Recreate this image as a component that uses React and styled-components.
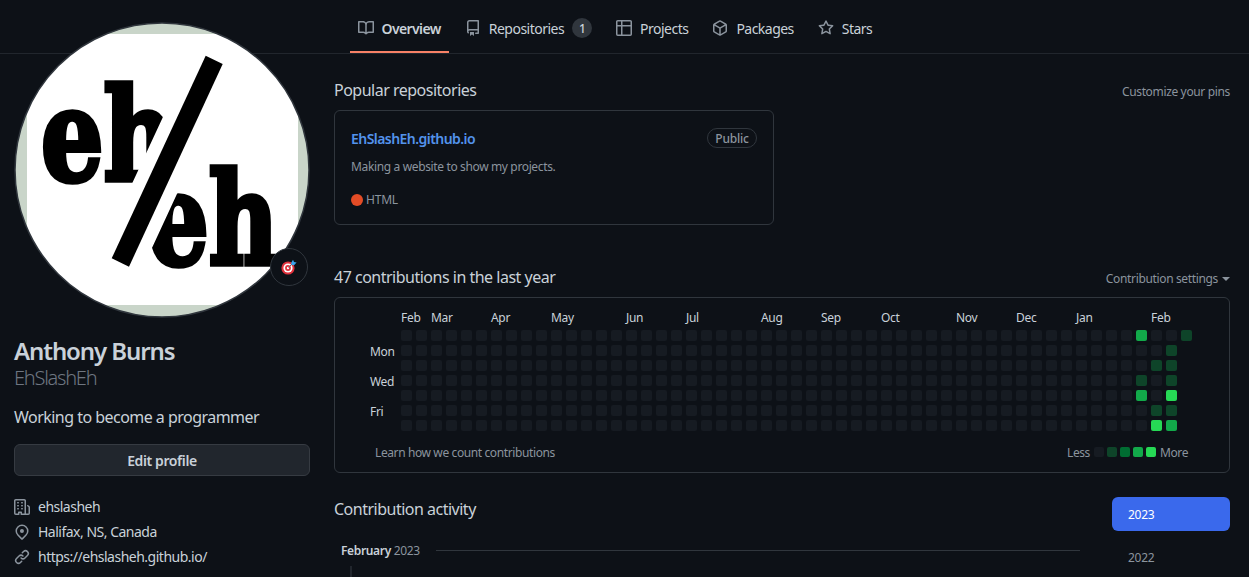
import React from "react";
import styled, { createGlobalStyle } from "styled-components";

const Global = createGlobalStyle`
  html, body { margin: 0; padding: 0; background: #0d1117; }
  body { font-family: "Noto Sans", "Open Sans", sans-serif; color: #c9d1d9; }
  #root { height: 100vh; overflow: hidden; }
  * { box-sizing: border-box; }
`;

const Header = styled.header`
  height: 54px;
  border-bottom: 1px solid #21262d;
  padding-left: 349.5px;
  display: flex;
  gap: 8px;
`;
const Tab = styled.div`
  position: relative;
  height: 53px;
  padding: 6px 8px 0;
  display: flex;
  align-items: center;
  gap: 8px;
  font-size: 14px;
  font-weight: ${(p) => (p.$active ? 600 : 400)};
  letter-spacing: ${(p) => (p.$active ? "-0.6px" : "-0.52px")};
  color: #c9d1d9;
  border-bottom: 2px solid ${(p) => (p.$active ? "#f78166" : "transparent")};
  white-space: nowrap;
  svg { fill: #8b949e; flex: none; margin-top: -1px; }
`;
const Counter = styled.span`
  width: 20px;
  height: 20px;
  margin-top: -1px;
  border-radius: 10px;
  background: #30363d;
  font-size: 12px;
  font-weight: 500;
  display: flex;
  align-items: center;
  justify-content: center;
`;

const Body = styled.div`
  display: flex;
  padding: 0 19px 0 14px;
  gap: 24px;
`;
const Sidebar = styled.aside`
  width: 296px;
  flex: none;
  margin-top: -32px;
`;
const AvatarWrap = styled.div`
  position: relative;
  width: 296px;
  height: 296px;
`;
const AvatarSvg = styled.svg`
  display: block;
  width: 296px;
  height: 296px;
`;
const StatusBadge = styled.div`
  position: absolute;
  left: 256px;
  top: 226px;
  width: 38px;
  height: 38px;
  border-radius: 50%;
  background: #0d1117;
  border: 1px solid #30363d;
  display: flex;
  align-items: center;
  justify-content: center;
`;
const Name = styled.div`
  margin-top: 18px;
  font-size: 24px;
  line-height: 30px;
  font-weight: 600;
  letter-spacing: -1.1px;
  color: #c9d1d9;
`;
const Login = styled.div`
  font-size: 20px;
  line-height: 24px;
  font-weight: 300;
  letter-spacing: -1.25px;
  color: #6e7681;
`;
const Bio = styled.div`
  margin-top: 15px;
  font-size: 16px;
  line-height: 24px;
  letter-spacing: -0.53px;
  color: #c9d1d9;
`;
const EditButton = styled.div`
  margin-top: 15px;
  height: 32px;
  background: #21262d;
  border: 1px solid #363b42;
  border-radius: 6px;
  font-size: 14px;
  font-weight: 600;
  letter-spacing: -0.4px;
  color: #c9d1d9;
  display: flex;
  align-items: center;
  justify-content: center;
`;
const Details = styled.ul`
  list-style: none;
  margin: 18px 0 0;
  padding: 0;
`;
const Detail = styled.li`
  height: 25px;
  display: flex;
  align-items: center;
  gap: 8px;
  font-size: 14px;
  letter-spacing: -0.5px;
  color: #c9d1d9;
  svg { fill: #8b949e; flex: none; }
`;

const Main = styled.main`
  flex: 1;
  min-width: 0;
  padding-top: 24px;
`;
const SectionHead = styled.div`
  height: 24px;
  display: flex;
  align-items: center;
  justify-content: space-between;
`;
const Heading = styled.h2`
  margin: 0;
  font-size: 16px;
  line-height: 24px;
  font-weight: 400;
  letter-spacing: -0.5px;
  color: #c9d1d9;
`;
const SmallLink = styled.span`
  padding-top: 3px;
  font-size: 12px;
  letter-spacing: -0.35px;
  color: #8b949e;
  display: flex;
  align-items: center;
  gap: 4px;
`;
const Caret = styled.i`
  width: 0;
  height: 0;
  border-left: 4px solid transparent;
  border-right: 4px solid transparent;
  border-top: 4px solid #8b949e;
`;
const RepoCard = styled.div`
  width: 440px;
  height: 115px;
  margin-top: 8px;
  padding: 17px 16px 0;
  border: 1px solid #30363d;
  border-radius: 6px;
`;
const RepoTop = styled.div`
  display: flex;
  justify-content: space-between;
  align-items: center;
  height: 20px;
`;
const RepoName = styled.span`
  font-size: 14px;
  font-weight: 600;
  letter-spacing: -0.55px;
  color: #5393ec;
`;
const Pill = styled.span`
  height: 20px;
  width: 50px;
  border: 1px solid #30363d;
  border-radius: 10px;
  font-size: 12px;
  font-weight: 500;
  letter-spacing: -0.2px;
  color: #8b949e;
  display: flex;
  align-items: center;
  justify-content: center;
`;
const RepoDesc = styled.div`
  margin-top: 10px;
  font-size: 12px;
  line-height: 18px;
  letter-spacing: -0.36px;
  color: #8b949e;
`;
const RepoMeta = styled.div`
  margin-top: 15px;
  display: flex;
  align-items: center;
  gap: 3px;
  font-size: 12px;
  line-height: 18px;
  letter-spacing: -0.2px;
  color: #8b949e;
`;
const LangDot = styled.i`
  width: 12px;
  height: 12px;
  border-radius: 50%;
  background: #e34c26;
`;
const ContribHead = styled(SectionHead)`
  margin-top: 40px;
`;
const CalendarBox = styled.div`
  margin-top: 8px;
  height: 176px;
  border: 1px solid #30363d;
  border-radius: 6px;
  padding-top: 11px;
`;
const Months = styled.div`
  display: grid;
  grid-template-columns: repeat(53, 15px);
  height: 18px;
  margin: 0 0 3px 66px;
  font-size: 12px;
  line-height: 18px;
  letter-spacing: -0.3px;
  color: #c9d1d9;
`;
const Month = styled.span`
  grid-row: 1;
  grid-column-start: ${(p) => p.$col + 1};
  white-space: nowrap;
  width: 0;
`;
const Heat = styled.div`
  display: flex;
  margin-left: 35px;
`;
const DayLabels = styled.div`
  width: 31px;
  display: grid;
  grid-template-rows: repeat(7, 15px);
  font-size: 12px;
  letter-spacing: -0.3px;
  color: #c9d1d9;
`;
const DayLabel = styled.span`
  grid-row: ${(p) => p.$row + 1};
  line-height: 13px;
  display: block;
`;
const Cells = styled.div`
  display: grid;
  grid-template-rows: repeat(7, 11px);
  grid-auto-columns: 11px;
  grid-auto-flow: column;
  gap: 4px;
`;
const LEVELS = ["#161b22", "#0e4429", "#006d32", "#12a94a", "#26d955"];
const Cell = styled.i`
  display: block;
  width: ${(p) => p.$size || 11}px;
  height: ${(p) => p.$size || 11}px;
  border-radius: 2px;
  background: ${(p) => LEVELS[p.$level]};
`;
const CalFooter = styled.div`
  margin-top: 8px;
  padding: 0 40px;
  display: flex;
  justify-content: space-between;
  align-items: center;
  height: 18px;
  font-size: 12px;
  letter-spacing: -0.39px;
  color: #8b949e;
`;
const Legend = styled.div`
  display: flex;
  align-items: center;
  gap: 3px;
`;
const LegendText = styled.span`
  margin: 0 1px;
  letter-spacing: -0.4px;
`;
const Activity = styled.div`
  margin-top: 24px;
  display: flex;
  gap: 32px;
`;
const ActivityMain = styled.div`
  flex: 1;
  min-width: 0;
`;
const MonthRow = styled.div`
  margin-top: 20px;
  padding-left: 7px;
  height: 18px;
  display: flex;
  align-items: center;
  gap: 16px;
  font-size: 12px;
  letter-spacing: -0.35px;
  color: #8b949e;
  b { font-weight: 600; color: #c9d1d9; }
`;
const Rule = styled.i`
  flex: 1;
  height: 1px;
  background: #30363d;
`;
const Stem = styled.div`
  margin: 7px 0 0 16px;
  width: 2px;
  height: 30px;
  background: #21262d;
`;
const Years = styled.div`
  width: 118px;
  flex: none;
`;
const Year = styled.div`
  height: 34px;
  padding-left: 16px;
  border-radius: 6px;
  display: flex;
  align-items: center;
  font-size: 12px;
  letter-spacing: -0.3px;
  margin-bottom: 9px;
  background: ${(p) => (p.$active ? "#3a69ec" : "transparent")};
  color: ${(p) => (p.$active ? "#ffffff" : "#8b949e")};
`;

const Icon = ({ d, size = 16 }) => (
  <svg width={size} height={size} viewBox="0 0 16 16" aria-hidden="true"><path d={d} /></svg>
);
const I = {
  book: "M0 1.75A.75.75 0 0 1 .75 1h4.253c1.227 0 2.317.59 3 1.501A3.743 3.743 0 0 1 11.006 1h4.245a.75.75 0 0 1 .75.75v10.5a.75.75 0 0 1-.75.75h-4.507a2.25 2.25 0 0 0-1.591.659l-.622.621a.75.75 0 0 1-1.06 0l-.622-.621A2.25 2.25 0 0 0 5.258 13H.75a.75.75 0 0 1-.75-.75Zm7.251 10.324.004-5.073-.002-2.253A2.25 2.25 0 0 0 5.003 2.5H1.5v9h3.757a3.75 3.75 0 0 1 1.994.574ZM8.755 4.75l-.004 7.322a3.752 3.752 0 0 1 1.992-.572H14.5v-9h-3.495a2.25 2.25 0 0 0-2.25 2.25Z",
  repo: "M2 2.5A2.5 2.5 0 0 1 4.5 0h8.75a.75.75 0 0 1 .75.75v12.5a.75.75 0 0 1-.75.75h-2.5a.75.75 0 0 1 0-1.5h1.75v-2h-8a1 1 0 0 0-.714 1.7.75.75 0 1 1-1.072 1.05A2.495 2.495 0 0 1 2 11.5Zm10.5-1h-8a1 1 0 0 0-1 1v6.708A2.486 2.486 0 0 1 4.5 9h8ZM5 12.25a.25.25 0 0 1 .25-.25h3.5a.25.25 0 0 1 .25.25v3.25a.25.25 0 0 1-.4.2l-1.45-1.087a.249.249 0 0 0-.3 0L5.4 15.7a.25.25 0 0 1-.4-.2Z",
  table: "M0 1.75C0 .784.784 0 1.75 0h12.5C15.216 0 16 .784 16 1.75v12.5A1.75 1.75 0 0 1 14.25 16H1.75A1.75 1.75 0 0 1 0 14.25ZM6.5 6.5v8h7.75a.25.25 0 0 0 .25-.25V6.5Zm8-1.5V1.75a.25.25 0 0 0-.25-.25H6.5V5Zm-13 1.5v7.75c0 .138.112.25.25.25H5v-8ZM5 5V1.5H1.75a.25.25 0 0 0-.25.25V5Z",
  pkg: "m8.878.392 5.25 3.045c.54.314.872.89.872 1.514v6.098a1.75 1.75 0 0 1-.872 1.514l-5.25 3.045a1.75 1.75 0 0 1-1.756 0l-5.25-3.045A1.75 1.75 0 0 1 1 11.049V4.951c0-.624.332-1.201.872-1.514L7.122.392a1.75 1.75 0 0 1 1.756 0ZM7.875 1.69l-4.63 2.685L8 7.133l4.755-2.758-4.63-2.685a.248.248 0 0 0-.25 0ZM2.5 5.677v5.372c0 .09.047.171.125.216l4.625 2.683V8.432Zm6.25 8.271 4.625-2.683a.25.25 0 0 0 .125-.216V5.677L8.75 8.432Z",
  star: "M8 .25a.75.75 0 0 1 .673.418l1.882 3.815 4.21.612a.75.75 0 0 1 .416 1.279l-3.046 2.97.719 4.192a.751.751 0 0 1-1.088.791L8 12.347l-3.766 1.98a.75.75 0 0 1-1.088-.79l.72-4.194L.818 6.374a.75.75 0 0 1 .416-1.28l4.21-.611L7.327.668A.75.75 0 0 1 8 .25Zm0 2.445L6.615 5.5a.75.75 0 0 1-.564.41l-3.097.45 2.24 2.184a.75.75 0 0 1 .216.664l-.528 3.084 2.769-1.456a.75.75 0 0 1 .698 0l2.77 1.456-.53-3.084a.75.75 0 0 1 .216-.664l2.24-2.183-3.096-.45a.75.75 0 0 1-.564-.41L8 2.694Z",
  org: "M1.75 16A1.75 1.75 0 0 1 0 14.25V1.75C0 .784.784 0 1.75 0h8.5C11.216 0 12 .784 12 1.75v12.5c0 .085-.006.168-.018.25h2.268a.25.25 0 0 0 .25-.25V8.285a.25.25 0 0 0-.111-.208l-1.055-.703a.749.749 0 1 1 .832-1.248l1.055.703c.487.325.779.871.779 1.456v5.965A1.75 1.75 0 0 1 14.25 16h-3.5a.766.766 0 0 1-.197-.026c-.099.017-.2.026-.303.026h-3a.75.75 0 0 1-.75-.75V14h-1v1.25a.75.75 0 0 1-.75.75Zm-.25-1.75c0 .138.112.25.25.25H4v-1.25a.75.75 0 0 1 .75-.75h2.5a.75.75 0 0 1 .75.75v1.25h2.25a.25.25 0 0 0 .25-.25V1.75a.25.25 0 0 0-.25-.25h-8.5a.25.25 0 0 0-.25.25ZM3.75 6h.5a.75.75 0 0 1 0 1.5h-.5a.75.75 0 0 1 0-1.5ZM3 3.75A.75.75 0 0 1 3.75 3h.5a.75.75 0 0 1 0 1.5h-.5A.75.75 0 0 1 3 3.75Zm4 3A.75.75 0 0 1 7.75 6h.5a.75.75 0 0 1 0 1.5h-.5A.75.75 0 0 1 7 6.75ZM7.75 3h.5a.75.75 0 0 1 0 1.5h-.5a.75.75 0 0 1 0-1.5ZM3 9.75A.75.75 0 0 1 3.75 9h.5a.75.75 0 0 1 0 1.5h-.5A.75.75 0 0 1 3 9.75ZM7.75 9h.5a.75.75 0 0 1 0 1.5h-.5a.75.75 0 0 1 0-1.5Z",
  pin: "m12.596 11.596-3.535 3.536a1.5 1.5 0 0 1-2.122 0l-3.535-3.536a6.5 6.5 0 1 1 9.192-9.193 6.5 6.5 0 0 1 0 9.193Zm-1.06-8.132v-.001a5 5 0 1 0-7.072 7.072L8 14.07l3.536-3.534a5 5 0 0 0 0-7.072ZM8 9a2 2 0 1 1-.001-3.999A2 2 0 0 1 8 9Z",
  link: "m7.775 3.275 1.25-1.25a3.5 3.5 0 1 1 4.95 4.95l-2.5 2.5a3.5 3.5 0 0 1-4.95 0 .751.751 0 0 1 .018-1.042.751.751 0 0 1 1.042-.018 1.998 1.998 0 0 0 2.83 0l2.5-2.5a2.002 2.002 0 0 0-2.83-2.83l-1.25 1.25a.751.751 0 0 1-1.042-.018.751.751 0 0 1-.018-1.042Zm-4.69 9.64a1.998 1.998 0 0 0 2.83 0l1.25-1.25a.751.751 0 0 1 1.042.018.751.751 0 0 1 .018 1.042l-1.25 1.25a3.5 3.5 0 1 1-4.95-4.95l2.5-2.5a3.5 3.5 0 0 1 4.95 0 .751.751 0 0 1-.018 1.042.751.751 0 0 1-1.042.018 1.998 1.998 0 0 0-2.83 0l-2.5 2.5a1.998 1.998 0 0 0 0 2.83Z",
};

const MONTHS = [["Feb",0],["Mar",2],["Apr",6],["May",10],["Jun",15],["Jul",19],["Aug",24],["Sep",28],["Oct",32],["Nov",37],["Dec",41],["Jan",45],["Feb",50]];
const ACTIVE = {
  "49-0": 3, "49-3": 1, "49-4": 3,
  "50-2": 1, "50-5": 1, "50-6": 4,
  "51-1": 1, "51-2": 1, "51-3": 1, "51-4": 4, "51-5": 1, "51-6": 3,
  "52-0": 1,
};
const cells = [];
for (let c = 0; c < 53; c++) {
  const rows = c === 52 ? 1 : 7;
  for (let r = 0; r < rows; r++) cells.push({ key: `${c}-${r}`, level: ACTIVE[`${c}-${r}`] || 0 });
}

const Logo = () => (
  <AvatarSvg viewBox="0 0 296 296">
    <defs>
      <clipPath id="disc"><circle cx="148" cy="148" r="147" /></clipPath>
    </defs>
    <g clipPath="url(#disc)">
      <rect width="296" height="296" fill="#c9d5c9" />
      <rect x="13" y="12" width="271" height="271" fill="#ffffff" />
      <g fontFamily="'DejaVu Serif', serif" fontWeight="700" fontSize="128" fill="#000" stroke="#000" strokeWidth="5.5" strokeLinejoin="miter">
        <text x="27" y="158" textLength="134" lengthAdjust="spacingAndGlyphs">eh</text>
        <text x="134" y="242" textLength="130" lengthAdjust="spacingAndGlyphs">eh</text>
      </g>
      <polygon points="191.7,33.7 208.7,42 115,244.7 97.7,236.3" fill="#000" stroke="#fff" strokeWidth="26" strokeLinejoin="miter" paintOrder="stroke" />
    </g>
    <circle cx="148" cy="148" r="147" fill="none" stroke="#30363d" strokeWidth="1.5" />
  </AvatarSvg>
);

const Dart = () => (
  <svg width="16" height="16" viewBox="0 0 16 16" aria-hidden="true">
    <circle cx="7" cy="9" r="6.6" fill="#e0313c" />
    <circle cx="7" cy="9" r="4.6" fill="#fff" />
    <circle cx="7" cy="9" r="2.9" fill="#e0313c" />
    <circle cx="7" cy="9" r="1.2" fill="#fff" />
    <path d="M7.5 8.5 11 5" stroke="#5b6770" strokeWidth="1" />
    <path d="M10 4.2 12 .8l1 2.2 2.6.4-2.6 2.8-2-.2Z" fill="#3aa5ee" />
  </svg>
);

export default function App() {
  return (
    <>
      <Global />
      <Header>
        <Tab $active><Icon d={I.book} />Overview</Tab>
        <Tab><Icon d={I.repo} />Repositories<Counter>1</Counter></Tab>
        <Tab><Icon d={I.table} />Projects</Tab>
        <Tab><Icon d={I.pkg} />Packages</Tab>
        <Tab><Icon d={I.star} />Stars</Tab>
      </Header>
      <Body>
        <Sidebar>
          <AvatarWrap>
            <Logo />
            <StatusBadge><Dart /></StatusBadge>
          </AvatarWrap>
          <Name>Anthony Burns</Name>
          <Login>EhSlashEh</Login>
          <Bio>Working to become a programmer</Bio>
          <EditButton>Edit profile</EditButton>
          <Details>
            <Detail><Icon d={I.org} />ehslasheh</Detail>
            <Detail><Icon d={I.pin} />Halifax, NS, Canada</Detail>
            <Detail><Icon d={I.link} />https://ehslasheh.github.io/</Detail>
          </Details>
        </Sidebar>
        <Main>
          <SectionHead>
            <Heading>Popular repositories</Heading>
            <SmallLink>Customize your pins</SmallLink>
          </SectionHead>
          <RepoCard>
            <RepoTop>
              <RepoName>EhSlashEh.github.io</RepoName>
              <Pill>Public</Pill>
            </RepoTop>
            <RepoDesc>Making a website to show my projects.</RepoDesc>
            <RepoMeta><LangDot />HTML</RepoMeta>
          </RepoCard>
          <ContribHead>
            <Heading>47 contributions in the last year</Heading>
            <SmallLink>Contribution settings<Caret /></SmallLink>
          </ContribHead>
          <CalendarBox>
            <Months>
              {MONTHS.map(([m, c]) => <Month key={m + c} $col={c}>{m}</Month>)}
            </Months>
            <Heat>
              <DayLabels>
                <DayLabel $row={1}>Mon</DayLabel>
                <DayLabel $row={3}>Wed</DayLabel>
                <DayLabel $row={5}>Fri</DayLabel>
              </DayLabels>
              <Cells>
                {cells.map((c) => <Cell key={c.key} $level={c.level} />)}
              </Cells>
            </Heat>
            <CalFooter>
              <span>Learn how we count contributions</span>
              <Legend>
                <LegendText>Less</LegendText>
                {[0, 1, 2, 3, 4].map((l) => <Cell key={l} $level={l} $size={10} />)}
                <LegendText>More</LegendText>
              </Legend>
            </CalFooter>
          </CalendarBox>
          <Activity>
            <ActivityMain>
              <Heading>Contribution activity</Heading>
              <MonthRow>
                <span><b>February</b> 2023</span>
                <Rule />
              </MonthRow>
              <Stem />
            </ActivityMain>
            <Years>
              <Year $active>2023</Year>
              <Year>2022</Year>
            </Years>
          </Activity>
        </Main>
      </Body>
    </>
  );
}
